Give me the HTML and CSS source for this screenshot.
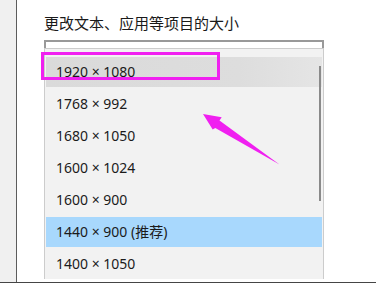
FILE: index.html
```html
<!DOCTYPE html>
<html lang="zh-CN">
<head>
<meta charset="utf-8">
<title>显示设置</title>
<link rel="stylesheet" href="styles.css">
</head>
<body>
<div class="screen">
  <aside class="side"></aside>
  <main class="content">
    <p class="label">更改文本、应用等项目的大小</p>
    <div class="combo">
      <div class="combo-top"></div>
      <div class="list">
        <ul class="items">
          <li class="item hover">1920 × 1080</li>
          <li class="item">1768 × 992</li>
          <li class="item">1680 × 1050</li>
          <li class="item">1600 × 1024</li>
          <li class="item">1600 × 900</li>
          <li class="item selected">1440 × 900 (推荐)</li>
          <li class="item">1400 × 1050</li>
        </ul>
        <div class="scrollbar"></div>
      </div>
    </div>
  </main>
  <div class="mark"></div>
  <svg class="arrow" width="376" height="283" viewBox="0 0 376 283" aria-hidden="true">
    <polygon points="203,114 221.7,117.3 219.5,120.6 279.5,164.6 215.3,128 212.7,129.4" fill="#f020f0"/>
  </svg>
</div>
</body>
</html>
```
FILE: styles.css
```css
html, body {
  margin: 0;
  padding: 0;
  background: #ffffff;
}
.screen {
  position: relative;
  width: 376px;
  height: 283px;
  display: flex;
  overflow: hidden;
  box-sizing: border-box;
  border-bottom: 1px solid #454545;
  font-family: "Noto Sans", "Noto Sans CJK SC", sans-serif;
  color: #1b1b1b;
}
.side {
  width: 16px;
  flex: none;
  background: #f0f0f0;
  border-right: 1px solid #5c5c5c;
}
.content {
  flex: 1;
  padding-left: 27px;
  display: flex;
  flex-direction: column;
}
.label {
  margin: 13px 0 7px;
  font-family: "Noto Sans CJK SC", sans-serif;
  font-size: 15px;
  line-height: 20px;
  color: #1a1a1a;
}
.combo {
  width: 280px;
  display: flex;
  flex-direction: column;
}
.combo-top {
  height: 8px;
  box-sizing: border-box;
  border: 2px solid #999999;
  border-bottom: none;
  background: #ffffff;
}
.list {
  position: relative;
  flex: 1;
  background: #f2f2f2;
  border: 1px solid #cccccc;
  border-bottom: none;
  padding-top: 8px;
}
.items {
  list-style: none;
  margin: 0;
  padding: 0 1px;
  display: flex;
  flex-direction: column;
  gap: 2px;
}
.item {
  height: 30px;
  line-height: 30px;
  padding-left: 10px;
  font-size: 14px;
  white-space: nowrap;
}
.item.hover {
  background: linear-gradient(to right, #dadada, #dddddd 70%, #e5e5e5);
}
.item.selected {
  background: #a8d8fd;
}
.scrollbar {
  position: absolute;
  left: 274px;
  top: 17px;
  width: 2px;
  height: 135px;
  background: #8a8a8a;
}
.mark {
  position: absolute;
  left: 41px;
  top: 52px;
  width: 179px;
  height: 28px;
  box-sizing: border-box;
  border: 3px solid #f020f0;
}
.arrow {
  position: absolute;
  left: 0;
  top: 0;
}
```
